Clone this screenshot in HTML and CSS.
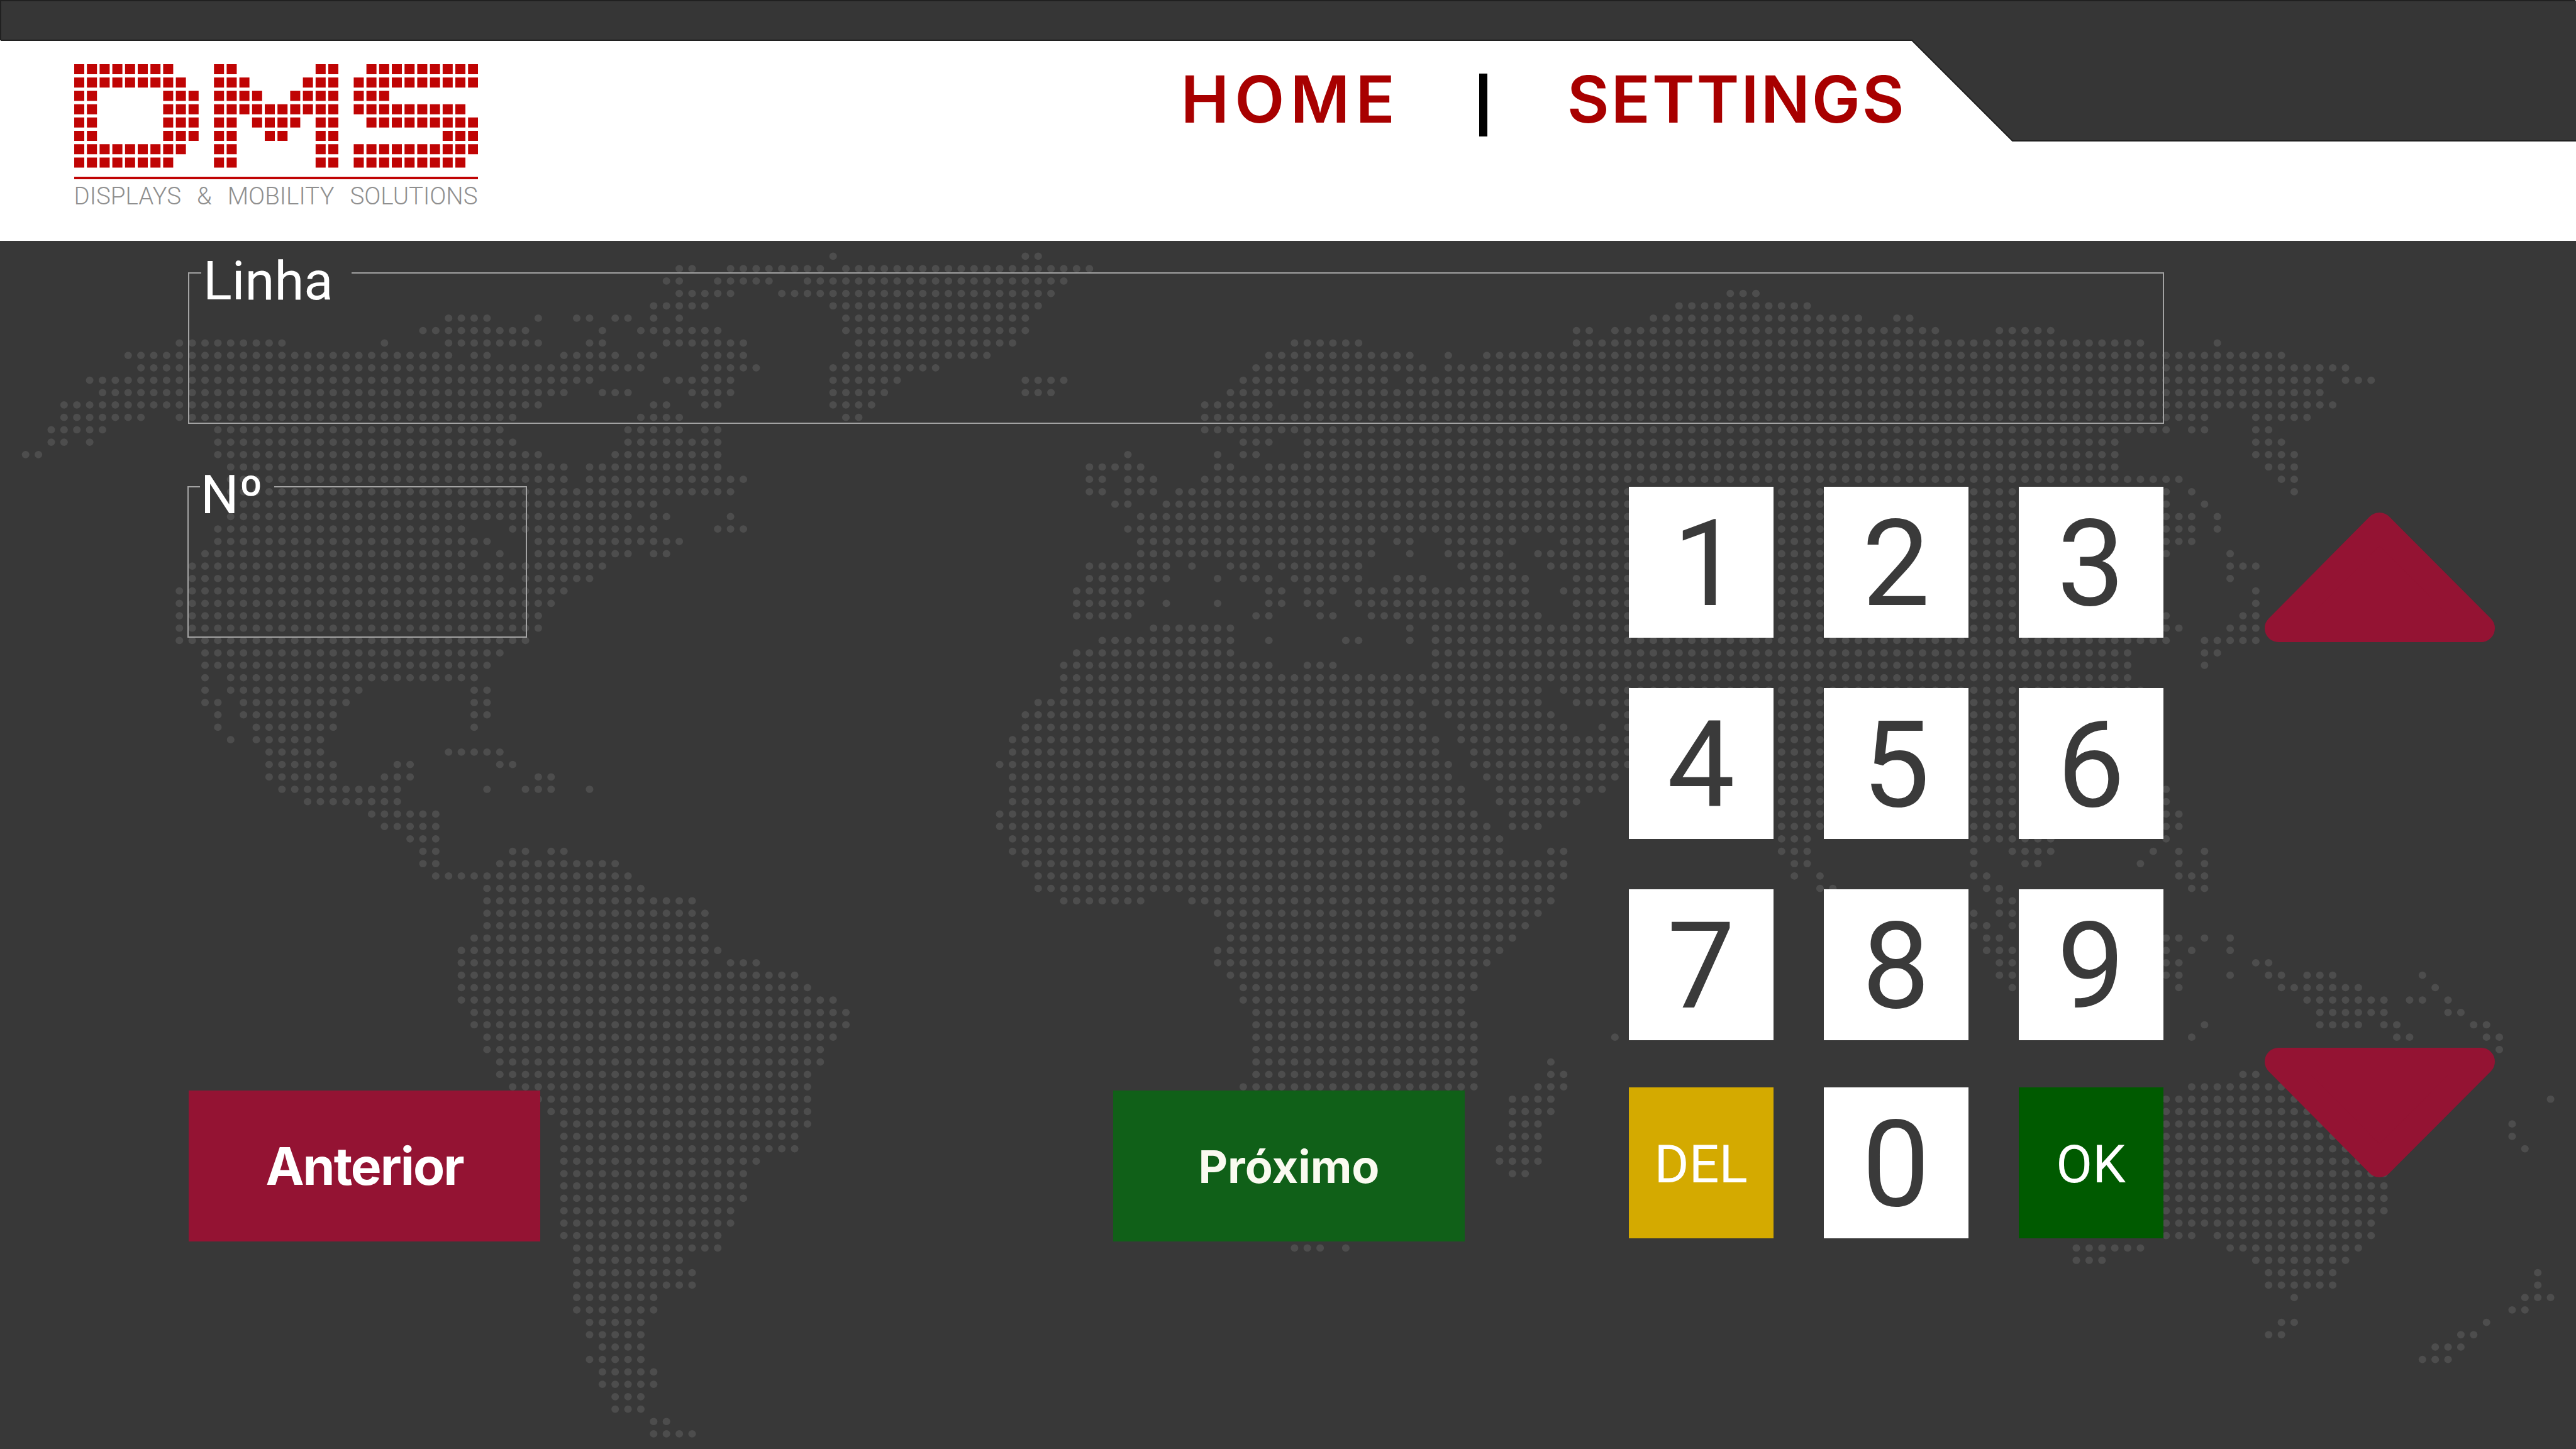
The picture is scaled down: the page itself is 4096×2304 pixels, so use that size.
FILE: index.html
```html
<!DOCTYPE html>
<html lang="pt">
<head>
<meta charset="utf-8">
<title>DMS</title>
<link rel="stylesheet" href="styles.css">
</head>
<body>
<svg class="world" viewBox="-1.997 -20.67 200.98 116.89" preserveAspectRatio="none" aria-hidden="true">
<path d="M63 0h.1M78 0H79.1
M51 1H52.1M55 1H62.1M64 1H83.1
M50 2H51.1M54 2H58.1M61 2H81.1
M51 3H55.1M59 3H80.1M133 3H135.1
M49 4H53.1M63 4H79.1M129 4H139.1
M33 5H36.1M40 5h.1M43 5H44.1M46 5H47.1M49 5h.1M51 5h.1M64 5H78.1M127 5H143.1M146 5H147.1
M31 6H39.1M45 6h.1M48 6H54.1M64 6H78.1M121 6H122.1M124 6H149.1M154 6H158.1
M12 7H20.1M28 7h.1M33 7H40.1M44 7H45.1M50 7H56.1M65 7H77.1M99 7H104.1M121 7H165.1M171 7h.1
M8 8H33.1M35 8H36.1M42 8H46.1M48 8H49.1M53 8H56.1M64 8H75.1M97 8H108.1M111 8h.1M114 8H176.1
M9 9H48.1M53 9H57.1M63 9H71.1M96 9H109.1M111 9H181.1
M5 10H44.1M50 10H55.1M63 10H68.1M78 10H81.1M95 10H99.1M101 10H106.1M108 10H179.1M181 10H183.1
M6 11H42.1M45 11H47.1M52 11H55.1M63 11H67.1M78 11H80.1M94 11H179.1
M3 12H40.1M49 12H50.1M53 12H54.1M63 12H66.1M92 12H97.1M100 12H180.1
M3 13H9.1M12 13H38.1M48 13H51.1M64 13H65.1M92 13H170.1M174 13H178.1
M2 14H6.1M15 14H37.1M47 14H51.1M53 14H54.1M92 14H167.1M169 14H170.1M174 14H175.1
M2 15H3.1M5 15h.1M15 15H38.1M47 15H54.1M95 15H97.1M100 15H163.1M174 15H176.1
M0 16H1.1M15 16H40.1M46 16H54.1M86 16h.1M93 16h.1M95 16H96.1M100 16H163.1M174 16H177.1
M16 17H42.1M44 17H54.1M83 17H87.1M93 17H94.1M97 17H163.1M175 17H177.1
M16 18H42.1M44 18H56.1M83 18H84.1M86 18H88.1M92 18H168.1M176 18H177.1
M16 19H55.1M83 19H84.1M86 19H88.1M90 19H167.1M169 19h.1M177 19h.1
M16 20H49.1M85 20H86.1M89 20H167.1M170 20h.1
M16 21H47.1M49 21H50.1M55 21h.1M87 21H169.1M171 21h.1
M15 22H34.1M38 22H49.1M54 22H56.1M86 22H169.1M171 22h.1
M15 23H36.1M40 23H51.1M87 23H105.1M107 23H108.1M111 23H116.1M120 23H169.1
M14 24H35.1M37 24h.1M40 24H47.1M49 24H50.1M87 24H105.1M108 24h.1M111 24H115.1M118 24H167.1M172 24h.1
M13 25H34.1M36 25H45.1M83 25H89.1M91 25h.1M94 25H96.1M98 25H104.1M112 25H116.1M119 25H165.1M172 25H174.1
M13 26H37.1M39 26H44.1M83 26H89.1M93 26h.1M95 26H97.1M99 26H104.1M107 26H109.1M113 26H117.1M121 26H165.1M172 26h.1
M12 27H42.1M82 27H87.1M97 27H98.1M100 27H102.1M104 27H117.1M120 27H165.1M174 27h.1
M12 28H41.1M82 28H87.1M89 28h.1M93 28h.1M97 28H98.1M100 28H101.1M104 28H117.1M121 28H165.1M174 28h.1
M12 29H40.1M82 29H86.1M96 29H97.1M101 29H102.1M105 29H118.1M121 29H167.1M173 29H174.1
M12 30H40.1M88 30H94.1M108 30h.1M110 30H168.1M172 30H174.1
M12 31H39.1M84 31H94.1M97 31h.1M103 31H104.1M108 31h.1M110 31H167.1M170 31H174.1
M14 32H37.1M82 32H94.1M110 32H164.1M170 32H171.1
M14 33H36.1M81 33H97.1M100 33H102.1M110 33H164.1M170 33h.1
M14 34h.1M16 34H35.1M81 34H164.1
M14 35h.1M16 35H26.1M35 35H36.1M81 35H118.1M120 35H165.1
M14 36H15.1M17 36H25.1M35 36H36.1M79 36H108.1M110 36H118.1M121 36H165.1
M15 37h.1M17 37H24.1M35 37H36.1M78 37H109.1M111 37H119.1M124 37H165.1
M15 38h.1M18 38H24.1M35 38h.1M78 38H109.1M112 38H120.1M123 38h.1M125 38H165.1
M16 39h.1M18 39H23.1M77 39H110.1M112 39H165.1
M19 40H23.1M33 40H37.1M77 40H110.1M113 40H165.1
M19 41H24.1M29 41H30.1M37 41H38.1M76 41H111.1M113 41H165.1
M19 42H24.1M28 42H30.1M40 42H41.1M77 42H111.1M114 42H124.1M126 42H165.1
M20 43H29.1M36 43h.1M39 43H41.1M44 43h.1M77 43H112.1M115 43H123.1M126 43H167.1
M22 44H29.1M77 44H112.1M115 44H121.1M126 44H167.1
M27 45H32.1M76 45H113.1M116 45H120.1M126 45H168.1
M28 46H32.1M76 46H114.1M116 46H118.1M128 46H168.1
M30 47H32.1M77 47H115.1M137 47H139.1M152 47H158.1M167 47h.1
M31 48H32.1M38 48H39.1M41 48H42.1M77 48H115.1M119 48H120.1M137 48H139.1M152 48h.1M155 48H158.1M166 48h.1M168 48h.1M170 48h.1
M31 49H32.1M37 49H46.1M78 49H120.1M138 49H139.1M152 49h.1M156 49H157.1M165 49h.1M168 49h.1M170 49h.1
M32 50H47.1M79 50H120.1M138 50h.1M140 50h.1M152 50H153.1M168 50H170.1
M36 51H48.1M79 51H119.1M140 51H141.1M153 51H154.1M169 51H170.1
M36 52H52.1M81 52H87.1M91 52H119.1M154 52H155.1
M36 53H53.1M93 53H118.1M152 53h.1M154 53H155.1
M36 54H53.1M94 54H117.1M152 54H153.1M155 54h.1
M35 55H53.1M94 55H116.1M153 55H154.1M167 55H168.1M170 55h.1M172 55h.1
M34 56H54.1M93 56H115.1M153 56H155.1M167 56h.1M169 56h.1M172 56h.1
M34 57H53.1M55 57H57.1M93 57H114.1M154 57H155.1M167 57H168.1M174 57H175.1
M34 58H60.1M94 58H113.1M154 58H155.1M167 58H168.1M172 58h.1M175 58H176.1M178 58H180.1M187 58h.1
M34 59H61.1M95 59H113.1M155 59h.1M168 59h.1M176 59H182.1M188 59h.1
M34 60H63.1M95 60H112.1M178 60H184.1M186 60H187.1M189 60h.1
M35 61H64.1M96 61H112.1M179 61H184.1M189 61H190.1
M35 62H64.1M96 62H113.1M170 62h.1M179 62H182.1M184 62H185.1M191 62H192.1
M36 63H63.1M96 63H113.1M124 63h.1M169 63h.1M185 63H186.1M192 63H193.1
M36 64H62.1M96 64H113.1M193 64h.1
M37 65H62.1M96 65H113.1M119 65h.1
M37 66H61.1M96 66H113.1M119 66H120.1M173 66H174.1
M38 67H61.1M95 67H113.1M118 67H120.1M169 67H176.1
M39 68H61.1M95 68H108.1M116 68H119.1M167 68H177.1M197 68h.1
M41 69H61.1M95 69H108.1M116 69H119.1M167 69H178.1
M42 70H61.1M95 70H108.1M116 70H118.1M167 70H179.1M194 70h.1
M42 71H60.1M95 71H108.1M116 71H118.1M167 71H180.1M194 71h.1
M42 72H60.1M95 72H108.1M115 72H118.1M167 72H181.1M195 72h.1
M42 73H57.1M115 73H118.1M167 73H182.1
M42 74H56.1M116 74H117.1M167 74H184.1
M42 75H56.1M167 75H184.1
M42 76H56.1M167 76H184.1
M42 77H55.1M167 77H184.1
M42 78H55.1M167 78H183.1
M42 79H54.1M167 79H169.1M171 79H183.1
M43 80H54.1M99 80H101.1M103 80h.1M160 80H165.1M172 80H182.1
M43 81H51.1M160 81H162.1M174 81H181.1
M43 82H52.1M175 82H180.1M196 82h.1
M43 83H52.1M175 83H180.1M196 83h.1
M43 84H49.1M177 84h.1M195 84H197.1
M43 85H49.1M194 85H195.1
M44 86H48.1M176 86H177.1M192 86h.1
M44 87H48.1M175 87H176.1M190 87H191.1
M45 88H48.1M188 88H190.1
M44 89H48.1M187 89H189.1
M45 90H49.1M45 91H49.1M46 92H48.1M46 93H48.1M49 94H50.1M49 95H52.1"/>
</svg>

<header class="topbar">
  <svg class="notch" viewBox="0 0 4096 224" aria-hidden="true"><path d="M-2 1H4098V224H3200L3040 64H-2Z"/><path class="notch-edge" d="M1 64V1H4095M4096 224H3200L3040 64H1"/></svg>
  <div class="logo">
    <svg class="logo-mark" viewBox="0 0 31.78 8.02" preserveAspectRatio="none" role="img" aria-label="DMS">
      <path d="M0 .38H8M11 .38H13M19 .38H21M23 .38H32
M0 1.38H9M11 1.38H14M18 1.38H21M22 1.38H32
M0 2.38H2M7 2.38H10M11 2.38H15M17 2.38H21M22 2.38H25
M0 3.38H2M7 3.38H10M11 3.38H21M22 3.38H31
M0 4.38H2M7 4.38H10M11 4.38H13M14 4.38H18M19 4.38H21M23 4.38H32
M0 5.38H2M7 5.38H10M11 5.38H13M15 5.38H17M19 5.38H21M29 5.38H32
M0 6.38H9M11 6.38H13M19 6.38H21M22 6.38H32
M0 7.38H8M11 7.38H13M19 7.38H21M22 7.38H31"/>
    </svg>
    <div class="logo-rule"></div>
    <div class="logo-tag"><span>DISPLAYS</span><span>&amp;</span><span>MOBILITY</span><span>SOLUTIONS</span></div>
  </div>
  <nav class="nav">
    <a class="nav-link nav-home">HOME</a>
    <span class="nav-sep"></span>
    <a class="nav-link nav-settings">SETTINGS</a>
  </nav>
</header>

<main class="content">
  <fieldset class="field field-line">
    <legend class="field-label label-line">Linha</legend>
  </fieldset>
  <div class="lower">
    <div class="left-col">
      <fieldset class="field field-number">
        <legend class="field-label label-number">Nº</legend>
      </fieldset>
      <div class="pager">
        <button class="page-btn prev">Anterior</button>
        <button class="page-btn next">Próximo</button>
      </div>
    </div>
    <div class="keypad">
      <div class="key-row"><button class="key key-one">1</button><button class="key">2</button><button class="key">3</button></div>
      <div class="key-row"><button class="key">4</button><button class="key">5</button><button class="key">6</button></div>
      <div class="key-row"><button class="key">7</button><button class="key">8</button><button class="key">9</button></div>
      <div class="key-row last">
        <button class="key key-del">DEL</button>
        <button class="key">0</button>
        <button class="key key-ok">OK</button>
      </div>
    </div>
    <div class="arrows">
      <svg class="arrow" viewBox="0 0 366 207" aria-label="Subir"><path d="M22 185L182.500 23L344 185Z"/></svg>
      <svg class="arrow" viewBox="0 0 366 207" aria-label="Descer"><path d="M22 22L182.500 184L344 22Z"/></svg>
    </div>
  </div>
</main>
</body>
</html>
```
FILE: styles.css
```css
* { box-sizing: border-box; }
html, body { margin: 0; padding: 0; }
body {
  width: 4096px;
  height: 2304px;
  position: relative;
  overflow: hidden;
  background: #383838;
  font-family: "Roboto", "Liberation Sans", sans-serif;
}

.world {
  position: absolute;
  left: 0;
  top: 0;
  width: 4096px;
  height: 2304px;
}
.world path {
  fill: none;
  stroke: #4d4d4d;
  stroke-width: .595;
  stroke-linecap: round;
  stroke-dasharray: 0 1;
}

/* header */
.topbar {
  position: relative;
  height: 383px;
  background: #fff;
  display: flex;
  align-items: flex-start;
  padding: 102px 0 0 117.500px;
}
.notch {
  position: absolute;
  left: 0;
  top: 0;
  width: 4096px;
  height: 224px;
  overflow: visible;
}
.notch path { fill: #363636; }
.notch .notch-edge { fill: none; stroke: #202020; stroke-width: 2; }

.logo { position: relative; width: 642px; display: flex; flex-direction: column; }
.logo-mark { display: block; width: 642px; height: 170px; }
.logo-mark path {
  fill: none;
  stroke: #c00404;
  stroke-width: .755;
  stroke-dasharray: .792 .208;
}
.logo-rule { height: 4px; margin-top: 9px; background: #c00404; }
.logo-tag {
  display: flex;
  justify-content: space-between;
  margin-top: 7px;
  font-size: 38.500px;
  line-height: 40px;
  font-weight: 300;
  color: #8f8f8f;
}

.nav {
  position: relative;
  display: flex;
  align-items: flex-start;
  gap: 131px;
  margin: -9px 0 0 1118px;
}
.nav-link {
  font-family: "Inter", "Liberation Sans", sans-serif;
  font-size: 103px;
  line-height: 130px;
  font-weight: 600;
  color: #a80000;
}
.nav-home { letter-spacing: 9px; }
.nav-settings { letter-spacing: 2.800px; }
.nav-sep { width: 13px; height: 100px; margin: 24px -4px 0 -6px; background: #000; }

/* form */
.content { position: relative; padding-left: 300px; }
.field {
  margin: 0;
  padding: 0;
  min-width: 0;
  height: 291px;
  border: 2px solid #a3a3a3;
}
.field-line { width: 3142px; margin-left: -1px; }
.field-number { width: 540px; margin-left: -2px; }
.field-label {
  padding: 26px 0 0;
  font-size: 85px;
  line-height: 76px;
  font-weight: 400;
  color: #fff;
}
.label-line { margin-left: 19px; padding-left: 3px; padding-right: 30px; }
.label-number { margin-left: 18px; padding-left: 1px; padding-right: 18px; }

.lower { display: flex; align-items: flex-start; margin-top: 49px; }
.left-col { width: 2029px; }
.pager { display: flex; justify-content: space-between; margin-top: 720px; }
.page-btn {
  width: 559px;
  height: 240px;
  border: 0;
  padding: 0;
  font-family: "Inter", "Liberation Sans", sans-serif;
  font-weight: 700;
  color: #fff;
}
.prev { background: #941333; font-size: 82px; letter-spacing: -2px; }
.next { background: #106018; font-size: 72px; color: #fafaf0; }

.keypad {
  display: flex;
  flex-direction: column;
  gap: 80px;
  margin: 51px 0 0 260.600px;
}
.key-row { display: flex; gap: 80px; }
.key-row.last { margin-top: -5px; }
.key {
  width: 230px;
  height: 240px;
  border: 0;
  padding: 6px 0 0;
  background: #fff;
  font-family: "Roboto", "Liberation Sans", sans-serif;
  font-size: 192px;
  font-weight: 400;
  line-height: 1;
  color: #3a3a3a;
}
.key-one { padding-left: 18px; }
.key-del { background: #d4aa00; color: #fff; font-size: 84px; }
.key-ok { background: #005a00; color: #fff; font-size: 84px; }

.arrows {
  display: flex;
  flex-direction: column;
  gap: 645px;
  margin: 91px 0 0 161px;
}
.arrow { display: block; width: 366px; height: 207px; }
.arrow path {
  fill: #941333;
  stroke: #941333;
  stroke-width: 44;
  stroke-linejoin: round;
}
```
